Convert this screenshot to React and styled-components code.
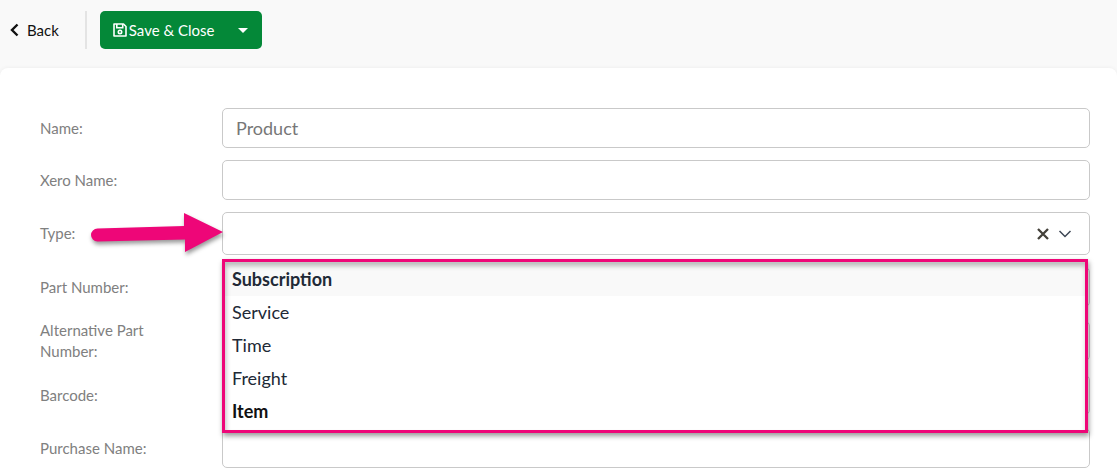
import React from "react";
import styled, { createGlobalStyle, css } from "styled-components";

const GlobalStyle = createGlobalStyle`
  *, *::before, *::after { box-sizing: border-box; }
  body {
    margin: 0;
    background: #f9f9f9;
    color: #212529;
    font-family: Lato, "Open Sans", sans-serif;
    font-size: 15px;
  }
  button, input, select { font-family: inherit; }
`;

const Page = styled.div`
  min-height: 100vh;
  display: flex;
  flex-direction: column;
  overflow: hidden;
`;

const Toolbar = styled.header`
  display: flex;
  align-items: center;
  height: 68px;
  padding: 0 10px 8px;
`;

const BackLink = styled.a`
  display: flex;
  align-items: center;
  gap: 8px;
  color: #111;
  text-decoration: none;
  line-height: 20px;
`;

const Divider = styled.span`
  width: 2px;
  height: 38px;
  margin: 0 13px 0 26px;
  background: #e4e4e4;
`;

const SplitButton = styled.div`
  display: flex;
  height: 38px;
  border-radius: 5px;
  overflow: hidden;
`;

const GreenButton = styled.button`
  display: flex;
  align-items: center;
  justify-content: center;
  gap: 2px;
  padding: 0 10px 0 13px;
  border: 0;
  background: #048838;
  color: #fff;
  font-size: 15px;
  line-height: 20px;
  cursor: pointer;
`;

const ToggleButton = styled(GreenButton)`
  width: 38px;
  padding: 0;
`;

const Panel = styled.main`
  flex: 1;
  padding: 40px 27px 7px 40px;
  background: #fff;
  border-radius: 8px 8px 0 0;
  box-shadow: 0 0 4px rgba(0, 0, 0, 0.06);
`;

const Form = styled.form`
  display: flex;
  flex-direction: column;
  gap: 12px;
`;

const Group = styled.div`
  display: flex;
  flex-direction: column;
  gap: ${({ $gap }) => $gap}px;
`;

const Row = styled.div`
  position: relative;
  display: grid;
  grid-template-columns: 182px minmax(0, 1fr);
  align-items: center;
`;

const Label = styled.label`
  max-width: 130px;
  color: #808080;
  font-size: 15px;
  line-height: 21px;
`;

const control = css`
  display: block;
  width: 100%;
  border: 1px solid #c9c9c9;
  border-radius: 5px;
  background: #fff;
  color: #777;
  font-size: 18px;
  outline: 0;
`;

const TextInput = styled.input`
  ${control}
  height: 40px;
  padding: 0 13px 1px;
`;

const SelectWrap = styled.div`
  position: relative;
`;

const Select = styled.select`
  ${control}
  height: 43px;
  padding: 0 60px 0 14px;
  appearance: none;
`;

const SelectIcons = styled.div`
  position: absolute;
  top: 0;
  right: 18px;
  height: 43px;
  display: flex;
  align-items: center;
  gap: 9px;
  pointer-events: none;
`;

const ClearButton = styled.button`
  display: flex;
  padding: 0;
  border: 0;
  background: none;
  cursor: pointer;
  pointer-events: auto;
`;

const Menu = styled.ul`
  position: absolute;
  z-index: 2;
  top: 47px;
  left: 0;
  right: 2px;
  margin: 0;
  padding: 4px 3px 5px;
  list-style: none;
  background: #fff;

  &::after {
    content: "";
    position: absolute;
    inset: 0;
    border: 3px solid #ee0678;
    box-shadow: 1px 3px 5px rgba(0, 0, 0, 0.4),
      inset 1px 4px 5px rgba(0, 0, 0, 0.26);
    pointer-events: none;
  }
`;

const Option = styled.li`
  padding: 0 7px;
  background: ${({ $active }) => ($active ? "#f9f9f9" : "#fff")};
  color: ${({ $selected }) => ($selected ? "#111" : "#212936")};
  font-size: 18px;
  font-weight: ${({ $active, $selected }) => ($active || $selected ? 700 : 400)};
  line-height: 33px;
`;

const Pointer = styled.svg`
  position: absolute;
  z-index: 3;
  top: 0;
  left: 48px;
  overflow: visible;
  pointer-events: none;
  filter: drop-shadow(1px 3px 2px rgba(0, 0, 0, 0.4));
`;

const TYPES = ["Subscription", "Service", "Time", "Freight", "Item"];

function Field({ id, label, value }) {
  return (
    <Row>
      <Label htmlFor={id}>{label}</Label>
      <TextInput id={id} type="text" defaultValue={value} />
    </Row>
  );
}

function TypeField() {
  return (
    <Row>
      <Label htmlFor="type">Type:</Label>
      <Pointer width="136" height="42" viewBox="0 0 136 42" aria-hidden="true">
        <path d="M9.500 16.500 L96 14 V1 L135 20 L97 40 V27.500 L9.500 29.500 A6.500 6.500 0 0 1 9.500 16.500Z" fill="#ee0678" />
      </Pointer>
      <SelectWrap>
        <Select id="type" defaultValue="">
          <option value="" aria-label="None" />
          {TYPES.map((t) => (
            <option key={t}>{t}</option>
          ))}
        </Select>
        <SelectIcons>
          <ClearButton type="button" aria-label="Clear type">
            <svg width="12" height="12" viewBox="0 0 12 12" fill="none" stroke="#44413a" strokeWidth="2.3">
              <path d="M1 1 11 11M11 1 1 11" />
            </svg>
          </ClearButton>
          <svg width="14" height="8" viewBox="0 0 14 8" fill="none" stroke="#3d4654" strokeWidth="1.5">
            <path d="M1.500 1 7 6.500 12.500 1" />
          </svg>
        </SelectIcons>
        <Menu role="listbox" aria-label="Type">
          {TYPES.map((t) => (
            <Option
              key={t}
              role="option"
              aria-selected={t === "Item"}
              $active={t === "Subscription"}
              $selected={t === "Item"}
            >
              {t}
            </Option>
          ))}
        </Menu>
      </SelectWrap>
    </Row>
  );
}

export default function App() {
  return (
    <Page>
      <GlobalStyle />
      <Toolbar>
        <BackLink href="#back">
          <svg width="9" height="14" viewBox="0 0 9 14" fill="none" stroke="#111" strokeWidth="2.400">
            <path d="M7.500 1.500 2 7 7.500 12.500" />
          </svg>
          Back
        </BackLink>
        <Divider />
        <SplitButton>
          <GreenButton type="button">
            <svg width="14" height="14" viewBox="0 0 14 14" fill="none" stroke="#fff" strokeWidth="1.600">
              <path d="M1 1H10.500L13 3.500V13H1Z" strokeLinejoin="round" />
              <path d="M3.800 1V4.800H9.700V1" />
              <circle cx="7" cy="8.900" r="1.700" />
            </svg>
            Save &amp; Close
          </GreenButton>
          <ToggleButton type="button" aria-label="More save options">
            <svg width="10" height="5" viewBox="0 0 10 5" fill="#fff">
              <path d="M0 0H10L5 5Z" />
            </svg>
          </ToggleButton>
        </SplitButton>
      </Toolbar>
      <Panel>
        <Form>
          <Group $gap={12}>
            <Field id="name" label="Name:" value="Product" />
            <Field id="xero-name" label="Xero Name:" />
            <TypeField />
          </Group>
          <Group $gap={13}>
            <Field id="part-number" label="Part Number:" />
            <Field id="alt-part-number" label="Alternative Part Number:" />
            <Field id="barcode" label="Barcode:" />
            <Field id="purchase-name" label="Purchase Name:" />
          </Group>
        </Form>
      </Panel>
    </Page>
  );
}
